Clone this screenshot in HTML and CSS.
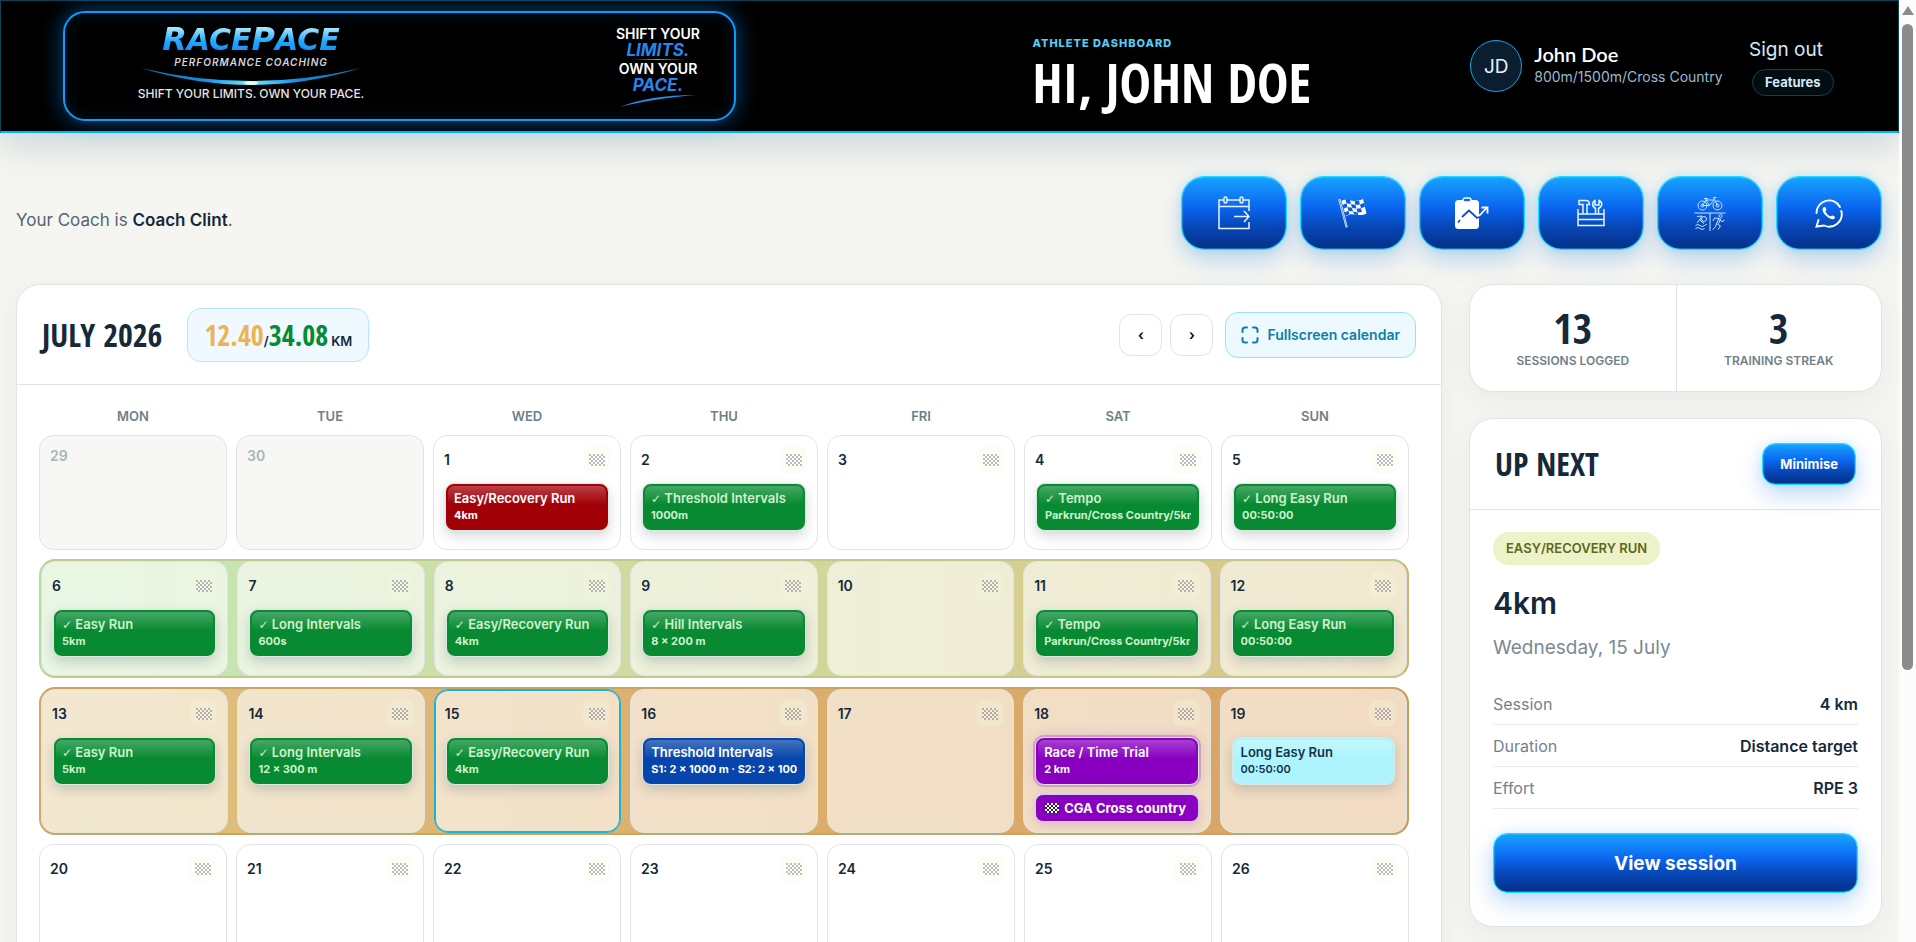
FILE: index.html
```html
<!DOCTYPE html>
<html lang="en">
<head>
  <meta charset="UTF-8">
  <meta name="viewport" content="width=device-width, initial-scale=1.0">
  <title>RacePace - Athlete Dashboard</title>
  <link rel="stylesheet" href="styles.css">
</head>
<body>

  <div class="app">

    <header class="topbar">
      <div class="banner">
        <div class="logo">
          <div class="logo-name"><span>R</span>ACE<span>P</span>ACE</div>
          <div class="logo-sub">PERFORMANCE COACHING</div>
          <svg class="logo-swoosh" viewBox="0 0 220 18" aria-hidden="true">
            <defs>
              <linearGradient id="swoosh">
                <stop offset="0" stop-color="#0b6f9c"/>
                <stop offset="0.3" stop-color="#1790ea"/>
                <stop offset="0.5" stop-color="#6ff0ff"/>
                <stop offset="0.7" stop-color="#1790ea"/>
                <stop offset="1" stop-color="#0b6f9c"/>
              </linearGradient>
            </defs>
            <path d="M0 0Q110 26 220 0Q110 34 0 0Z" fill="url(#swoosh)"/>
            <ellipse cx="110" cy="15" rx="7" ry="2" fill="#d9fff8"/>
          </svg>
          <div class="logo-tag">SHIFT YOUR LIMITS. OWN YOUR PACE.</div>
        </div>
        <div class="motto">
          <span>SHIFT YOUR</span>
          <em>LIMITS.</em>
          <i class="motto-line"></i>
          <span>OWN YOUR</span>
          <em>PACE.</em>
          <svg viewBox="0 0 78 14" width="78" height="14" aria-hidden="true">
            <path d="M1 13Q30 1 77 1Q32 5 1 13Z" fill="#1c8fe6"/>
          </svg>
        </div>
      </div>

      <div class="greeting">
        <p class="eyebrow">ATHLETE DASHBOARD</p>
        <h1>HI, JOHN DOE</h1>
      </div>

      <div class="user">
        <div class="avatar">JD</div>
        <div>
          <div class="user-name">John Doe</div>
          <div class="user-events">800m/1500m/Cross Country</div>
        </div>
      </div>

      <div class="account">
        <a href="#" class="signout">Sign out</a>
        <button class="features">Features</button>
      </div>
    </header>

    <section class="intro">
      <p class="coach">Your Coach is <strong>Coach Clint</strong>.</p>
      <div class="shortcuts">
        <button class="shortcut" aria-label="Schedule">
          <svg viewBox="0 0 32 34" width="32" height="34" fill="none" stroke="#e8f4ff" stroke-width="1.5">
            <path d="M6 4H1V32.500H31V26M9 4H22M25.500 4H31V15M1 10.500H31"/>
            <rect x="6" y="1" width="3" height="6" rx="1.500"/>
            <rect x="22" y="1" width="3" height="6" rx="1.500"/>
            <path d="M16 20.500H31M26 15L31 20.500L26 26"/>
          </svg>
        </button>
        <button class="shortcut" aria-label="Races">
          <svg viewBox="0 0 30 30" width="30" height="30">
            <path d="M1.500 2L8.500 28.500" stroke="#e8f4ff" stroke-width="2.200" stroke-linecap="round"/>
            <path d="M1.500 2L8.500 28.500" stroke="#0b55d8" stroke-width=".6"/>
            <path d="M3.500 3C8 -1 14 6 25 1L28.500 15.500C20 20 15 13 8 18.500Z" fill="#fff"/>
            <g fill="#0b5be0">
              <path d="M7.500 1.600L12 2.200L13 6L8.500 5.200ZM16.500 3.200L21 2.800L22 6.500L17.500 7ZM4.500 7L8.500 5.200L9.500 9L5.500 10.800ZM13 6L17.500 7L18.500 10.800L14 9.800ZM22 6.500L26 5L27 8.700L23 10.300ZM9.500 9L14 9.800L15 13.500L10.500 12.800ZM18.500 10.800L23 10.300L24 14L19.500 14.500ZM6.500 14.500L10.500 12.800L11.500 16.200L7.500 18ZM15 13.500L19.500 14.500L20.300 17.300L16 16.200Z"/>
            </g>
          </svg>
        </button>
        <button class="shortcut" aria-label="Progress">
          <svg viewBox="0 0 34 32" width="34" height="32">
            <rect x="0" y="3" width="24" height="29" rx="3.500" fill="#fff"/>
            <rect x="8" y="1" width="8" height="4" rx="2" fill="#0c6df0" stroke="#fff" stroke-width="1.300"/>
            <path d="M3 25.500L5 23M7 20L14 13.500L22 21L24 20" fill="none" stroke="#0a50c8" stroke-width="1.800"/>
            <path d="M24 19L32 10.500M26.500 10.500H32.500V16.500" fill="none" stroke="#fff" stroke-width="1.800"/>
          </svg>
        </button>
        <button class="shortcut" aria-label="Toolbox">
          <svg viewBox="0 0 28 28" width="28" height="28" fill="none" stroke="#e8f4ff" stroke-width="1.500">
            <path d="M1 10V26.500H27V10M1 15H27M1 20.500H27"/>
            <path d="M6 15V5.500H2V1.500H9C11.500 1.500 12.500 3 12.500 5.500H10V15"/>
            <path d="M18.500 15V9.500C14.500 7.500 15 3 18 1.500V6H22V1.500C25.500 3 26 7.500 21.500 9.500V15"/>
          </svg>
        </button>
        <button class="shortcut" aria-label="Cross training">
          <svg viewBox="0 0 32 35" width="32" height="35" fill="none" stroke="#c9e2ff" stroke-width="1">
            <circle cx="8.500" cy="9.500" r="4.500"/><circle cx="8.500" cy="9.500" r="1.500"/>
            <circle cx="23.500" cy="9.500" r="4.500"/><circle cx="23.500" cy="9.500" r="1.500"/>
            <path d="M8.500 9.500L12 4H20L15.500 9.500H8.500M12 4L15.500 9.500M23.500 9.500L19.500 1.500H22.500M10 2.500H14M11.500 2.500L12.500 5"/>
            <path d="M.5 17H31.500M16 17V35"/>
            <circle cx="10" cy="23" r="2.500"/>
            <path d="M3 20.500L8 20L5.500 24L10 27.500M3 27L6 23M1.500 29.500Q4 27.500 6 29.500T10.500 29.500T13 29M1.500 32.500Q4 30.500 6 32.500T10.500 32.500"/>
            <circle cx="26.500" cy="20" r="1.500"/>
            <path d="M25 22.500L20.500 22L19 25M25 22.500L27.500 25.500L30.500 24.500M25 22.500L22.500 27.500L26.500 30L24 33.500M22.500 27.500L21.500 31L18.500 33.500M27 22.500L24.500 27.500"/>
          </svg>
        </button>
        <button class="shortcut" aria-label="WhatsApp">
          <svg viewBox="0 0 28 29" width="28" height="29" fill="none" stroke="#fff" stroke-width="1.900" stroke-linecap="round">
            <path d="M1.500 14A12.500 12.500 0 0 1 25 8M26.300 12A12.500 12.500 0 0 1 9 26.500L1.500 27.500L3.500 21"/>
            <path d="M8.500 8.500C6 11 9 15 12 17.500C15.500 20.500 18.500 21 19.800 19.200C20.500 18 19 17 17.500 16.500C16 16.200 16 18 14.500 17C12.500 15.800 11.500 14.500 10.800 13C10.200 11.700 12 11.500 11 9.500C10.300 8 9.300 7.700 8.500 8.500Z" fill="#fff" stroke="none"/>
          </svg>
        </button>
      </div>
    </section>

    <main class="layout">

      <section class="card calendar">
        <div class="calendar-head">
          <h2>JULY 2026</h2>
          <div class="distance">
            <span class="done">12.40</span><span class="slash">/</span><span class="planned">34.08</span><span class="unit">KM</span>
          </div>
          <div class="calendar-nav">
            <button class="nav-btn" aria-label="Previous month">‹</button>
            <button class="nav-btn" aria-label="Next month">›</button>
            <button class="fullscreen-btn">
              <svg viewBox="0 0 18 18" width="18" height="18" fill="none" stroke="#0d7fa5" stroke-width="2" stroke-linecap="round" aria-hidden="true">
                <path d="M1.500 6V4Q1.500 1.500 4 1.500H6M12 1.500H14Q16.500 1.500 16.500 4V6M16.500 12V14Q16.500 16.500 14 16.500H12M6 16.500H4Q1.500 16.500 1.500 14V12"/>
              </svg>
              Fullscreen calendar
            </button>
          </div>
        </div>
        <div class="calendar-body">
          <div class="weekdays">
            <span>MON</span><span>TUE</span><span>WED</span><span>THU</span><span>FRI</span><span>SAT</span><span>SUN</span>
          </div>
          <div id="weeks" class="weeks"></div>
        </div>
      </section>

      <aside class="sidebar">
        <section class="card stats">
          <div class="stat">
            <div class="stat-value">13</div>
            <div class="stat-label">SESSIONS LOGGED</div>
          </div>
          <div class="stat">
            <div class="stat-value">3</div>
            <div class="stat-label">TRAINING STREAK</div>
          </div>
        </section>

        <section class="card next">
          <div class="next-head">
            <h2>UP NEXT</h2>
            <button class="primary minimise">Minimise</button>
          </div>
          <div class="next-body">
            <span class="badge">EASY/RECOVERY RUN</span>
            <h3>4km</h3>
            <p class="next-date">Wednesday, 15 July</p>
            <dl class="details">
              <div><dt>Session</dt><dd>4 km</dd></div>
              <div><dt>Duration</dt><dd>Distance target</dd></div>
              <div><dt>Effort</dt><dd>RPE 3</dd></div>
            </dl>
            <button class="primary view">View session</button>
          </div>
        </section>
      </aside>

    </main>
  </div>

  <div class="scrollbar" aria-hidden="true">
    <span class="scroll-up"></span>
    <span class="scroll-thumb"></span>
  </div>

  <script>
    // type: done | missed | planned | race | easy
    const sessions = {
      1: { type: 'missed', name: 'Easy/Recovery Run', info: '4km' },
      2: { type: 'done', name: 'Threshold Intervals', info: '1000m' },
      4: { type: 'done', name: 'Tempo', info: 'Parkrun/Cross Country/5km' },
      5: { type: 'done', name: 'Long Easy Run', info: '00:50:00' },
      6: { type: 'done', name: 'Easy Run', info: '5km' },
      7: { type: 'done', name: 'Long Intervals', info: '600s' },
      8: { type: 'done', name: 'Easy/Recovery Run', info: '4km' },
      9: { type: 'done', name: 'Hill Intervals', info: '8 × 200 m' },
      11: { type: 'done', name: 'Tempo', info: 'Parkrun/Cross Country/5km' },
      12: { type: 'done', name: 'Long Easy Run', info: '00:50:00' },
      13: { type: 'done', name: 'Easy Run', info: '5km' },
      14: { type: 'done', name: 'Long Intervals', info: '12 × 300 m' },
      15: { type: 'done', name: 'Easy/Recovery Run', info: '4km' },
      16: { type: 'planned', name: 'Threshold Intervals', info: 'S1: 2 × 1000 m · S2: 2 × 1000 m' },
      18: { type: 'race', name: 'Race / Time Trial', info: '2 km', race: 'CGA Cross country' },
      19: { type: 'easy', name: 'Long Easy Run', info: '00:50:00' }
    };

    const weeks = [
      { style: '', days: [29, 30, 1, 2, 3, 4, 5] },
      { style: 'week-light', days: [6, 7, 8, 9, 10, 11, 12] },
      { style: 'week-heavy', days: [13, 14, 15, 16, 17, 18, 19] },
      { style: '', days: [20, 21, 22, 23, 24, 25, 26] }
    ];

    const today = 15;

    function dayCell(day, outside) {
      if (outside) return `<div class="day outside"><span class="day-number">${day}</span></div>`;
      const s = sessions[day];
      return `
        <div class="day ${day === today ? 'today' : ''}">
          <div class="day-head">
            <span class="day-number">${day}</span>
            <button class="flag-btn" aria-label="Add race on ${day} July"><i class="checker"></i></button>
          </div>
          ${s ? `<button class="session ${s.type}">
            <span class="session-name">${s.type === 'done' ? '<b class="tick">✓</b> ' : ''}${s.name}</span>
            <span class="session-info">${s.info}</span>
          </button>` : ''}
          ${s && s.race ? `<button class="race-tag"><i class="checker"></i><span>${s.race}</span></button>` : ''}
        </div>`;
    }

    document.getElementById('weeks').innerHTML = weeks.map((week, i) =>
      `<div class="week ${week.style}">${week.days.map(d => dayCell(d, i === 0 && d > 7)).join('')}</div>`
    ).join('');
  </script>

</body>
</html>
```

FILE: styles.css
```css
* {
  box-sizing: border-box;
}

html {
  scrollbar-width: none;
}

body {
  margin: 0;
  display: flex;
  min-height: 100vh;
  background: #f5f6f1;
  color: #14293a;
  font-family: Inter, "Open Sans", sans-serif;
  font-size: 16px;
}

button {
  font-family: inherit;
  cursor: pointer;
}

h1, h2, h3, p, dl, dd {
  margin: 0;
}

h1, h2, .distance, .stat-value {
  font-family: "Liberation Sans Narrow", "Open Sans Condensed", "DejaVu Sans Condensed", sans-serif;
}

h2 {
  font-size: 32px;
  line-height: 40px;
}

.app {
  flex: 1;
  min-width: 0;
}

/* Header */
.topbar {
  display: grid;
  grid-template-columns: 970fr 438fr 279fr 149fr;
  align-items: center;
  height: 133px;
  padding-left: 62px;
  background: #000;
  border: 1px solid #0a4358;
  border-bottom: 2px solid #00b4ff;
  box-shadow: 0 12px 36px rgba(0, 60, 100, 0.18);
}

.banner {
  display: flex;
  justify-content: space-between;
  width: 673px;
  max-width: 90%;
  height: 110px;
  padding: 10px 34px 10px 20px;
  border: 2px solid #0a9bff;
  border-radius: 22px;
  background: #000;
  box-shadow: 0 0 22px rgba(0, 150, 255, 0.5), inset 0 0 18px rgba(0, 120, 200, 0.18);
}

.logo {
  display: flex;
  flex-direction: column;
  align-items: center;
  width: 332px;
}

.logo-name {
  font-family: "DejaVu Sans", sans-serif;
  font-size: 30px;
  line-height: 32px;
  font-weight: bold;
  font-style: italic;
  color: transparent;
  background: linear-gradient(#b8f0ff 10%, #1fa8ff 55%, #1484f5);
  background-clip: text;
}

.logo-name span {
  font-size: 32px;
}

.logo-sub {
  font-size: 10px;
  line-height: 12px;
  font-style: italic;
  font-weight: 600;
  letter-spacing: 1px;
  color: #d5d5d5;
}

.logo-swoosh {
  width: 220px;
  height: 18px;
  flex: none;
}

.logo-tag {
  font-size: 12px;
  line-height: 16px;
  font-weight: 500;
  color: #e4e4e4;
}

.motto {
  display: flex;
  flex-direction: column;
  align-items: center;
  justify-content: center;
  font-size: 14px;
  line-height: 17px;
  font-weight: 600;
  color: #fff;
}

.motto em {
  font-size: 17px;
  font-weight: 700;
  color: #2a84ee;
}

.motto-line {
  width: 54px;
  height: 1px;
  background: linear-gradient(90deg, #000, #3fc7a0, #000);
}

.greeting {
  padding-top: 16px;
}

.eyebrow {
  font-size: 11px;
  line-height: 14px;
  font-weight: 800;
  letter-spacing: 1px;
  color: #55cdf5;
}

h1 {
  margin-top: 4px;
  font-size: 53px;
  line-height: 58px;
  font-weight: 800;
  color: #fff;
  white-space: nowrap;
}

.user {
  display: flex;
  align-items: center;
  gap: 12px;
  white-space: nowrap;
}

.avatar {
  display: flex;
  align-items: center;
  justify-content: center;
  flex: none;
  width: 52px;
  height: 52px;
  border: 1px solid #08a8ea;
  border-radius: 50%;
  background: #0a1e30;
  color: #e6f5ff;
  font-size: 19px;
}

.user-name {
  font-family: Lato, sans-serif;
  font-size: 20px;
  line-height: 24px;
  font-weight: 600;
  color: #fff;
}

.user-events {
  padding-bottom: 2px;
  font-size: 14px;
  line-height: 22px;
  color: #9db9cd;
}

.account {
  display: flex;
  flex-direction: column;
  align-items: flex-start;
  gap: 6px;
}

.signout {
  font-size: 19px;
  line-height: 26px;
  color: #d3e9f7;
  text-decoration: none;
}

.features {
  margin-left: 3px;
  height: 27px;
  padding: 0 12px;
  border: 1px solid #0b4357;
  border-radius: 14px;
  background: #020d12;
  color: #d3e9f7;
  font-size: 13px;
  font-weight: 700;
}

/* Coach line and shortcut buttons */
.intro {
  display: flex;
  align-items: flex-end;
  justify-content: space-between;
  padding: 43px 17px 34px 16px;
}

.coach {
  padding-bottom: 18px;
  font-size: 17px;
  line-height: 24px;
  color: #55656f;
}

.coach strong {
  font-weight: 600;
  color: #14293a;
}

.shortcuts {
  display: flex;
  gap: 13px;
}

.shortcut,
.primary {
  display: flex;
  align-items: center;
  justify-content: center;
  border: 1px solid #1fdcff;
  background: linear-gradient(#18a3ff, #0a66f0 42%, #0748b8 68%, #052f87) padding-box;
  color: #fff;
  font-weight: 700;
  box-shadow: 0 10px 24px rgba(0, 100, 220, 0.24), 0 0 10px rgba(0, 190, 255, 0.14), inset 0 0 0 1px rgba(30, 215, 255, 0.4);
}

.shortcut {
  width: 106px;
  height: 74px;
  padding: 0;
  border-radius: 23px;
}

/* Main layout */
.layout {
  display: grid;
  grid-template-columns: minmax(0, 1426fr) minmax(0, 413fr);
  gap: 27px;
  align-items: start;
  padding: 0 17px 26px 16px;
}

.card {
  background: #fff;
  border: 1px solid #dfe5e5;
  border-radius: 24px;
  box-shadow: 0 8px 26px rgba(30, 50, 60, 0.06);
}

.calendar-head {
  display: flex;
  align-items: center;
  height: 100px;
  padding: 0 25px;
  border-bottom: 1px solid #dfe5e5;
}

.distance {
  display: flex;
  align-items: baseline;
  margin-left: 25px;
  padding: 9px 16px;
  border: 1px solid #b4e7fd;
  border-radius: 14px;
  background: #f0f9ff;
  font-size: 28px;
  line-height: 34px;
  font-weight: bold;
}

.done {
  color: #ebb453;
}

.planned {
  color: #068a33;
}

.slash,
.unit {
  font-family: Inter, sans-serif;
  font-size: 13px;
  line-height: 14px;
  font-weight: 600;
}

.unit {
  margin-left: 3px;
}

.calendar-nav {
  display: flex;
  align-items: center;
  gap: 8px;
  margin-left: auto;
}

.nav-btn {
  width: 43px;
  height: 42px;
  padding: 0;
  border: 1px solid #dfe5e5;
  border-radius: 12px;
  background: #fff;
  color: #000;
  font-size: 14px;
  font-weight: 600;
}

.fullscreen-btn {
  display: flex;
  align-items: center;
  gap: 8px;
  height: 46px;
  margin-left: 4px;
  padding: 0 15px;
  border: 1px solid #9be0fb;
  border-radius: 13px;
  background: #ecf9ff;
  color: #0d7fa5;
  font-size: 14px;
  font-weight: 600;
}

.calendar-body {
  padding: 21px 32px 22px 22px;
}

.weekdays {
  display: grid;
  grid-template-columns: repeat(7, 1fr);
  gap: 9px;
  margin-bottom: 9px;
  text-align: center;
  font-size: 13px;
  line-height: 20px;
  font-weight: 600;
  color: #6f7f8a;
}

.weeks {
  display: grid;
  gap: 9px;
}

.week {
  display: grid;
  grid-template-columns: repeat(7, minmax(0, 1fr));
  gap: 9px;
}

.week-light,
.week-heavy {
  border: 2px solid #b5d9a4;
  border-radius: 16px;
}

.week-light {
  border-color: #c2c98c #cdb271 #c2c98c #b3dba6;
  background: linear-gradient(90deg, #c4e8b9, #d1d89c 50%, #ddc284);
}

.week-heavy {
  border-color: #c9a463 #cf9955 #c9a463 #ceac68;
  background: linear-gradient(90deg, #dfc282, #dcae6c 50%, #d9a263);
}

.day {
  display: flex;
  flex-direction: column;
  min-height: 115px;
  padding: 10px;
  border: 1px solid #dfe5e5;
  border-radius: 14px;
  background: #fff;
}

.week-light .day,
.week-heavy .day {
  background: rgba(255, 255, 255, 0.62);
}

.day.outside {
  background: #f7f8f6;
}

.week .day.today {
  border-color: #17b4d4;
  box-shadow: inset 0 0 0 1px #17b4d4;
}

.outside .day-number {
  color: #a9b6b8;
}

.day-head {
  display: flex;
  align-items: center;
  justify-content: space-between;
  margin-bottom: 10px;
}

.day-number {
  font-size: 14px;
  line-height: 20px;
  font-weight: 600;
}

.flag-btn {
  display: flex;
  align-items: center;
  justify-content: center;
  width: 27px;
  height: 27px;
  padding: 0;
  border: 0;
  border-radius: 8px;
  background: rgba(245, 250, 220, 0.25);
}

.flag-btn .checker {
  opacity: 0.3;
}

.checker {
  flex: none;
  width: 16px;
  height: 12px;
  background: repeating-conic-gradient(#fff 0 25%, #2d2040 0 50%) 0 0 / 4px 4px;
}

.session {
  --base: #078a32;
  display: block;
  margin: 0 1px;
  padding: 6px 8px;
  border: 1px solid #dce8e2;
  border-radius: 9px;
  background: linear-gradient(rgba(255, 255, 255, 0.28), rgba(255, 255, 255, 0) 45%) padding-box, var(--base);
  color: #cdf2cb;
  text-align: left;
  overflow: hidden;
  box-shadow: inset 0 0 0 2px var(--base), 0 5px 12px rgba(20, 40, 60, 0.18);
}

.session span {
  display: block;
  overflow: hidden;
  white-space: nowrap;
}

.session-name {
  font-size: 13px;
  line-height: 17px;
  font-weight: 600;
}

.tick {
  font-family: "DejaVu Sans", sans-serif;
  font-size: 12px;
  line-height: 14px;
}

.session-info {
  font-size: 11px;
  line-height: 17px;
  font-weight: 700;
}

.session.missed {
  --base: #a10007;
  color: #fff;
}

.session.planned {
  --base: #0645ab;
  color: #fff;
}

.session.race {
  --base: #8900c1;
  color: #fff;
  box-shadow: inset 0 0 0 2px var(--base), 0 0 0 2px rgba(150, 40, 190, 0.28), 0 0 14px rgba(150, 40, 190, 0.22);
}

.session.easy {
  --base: #aef4ff;
  color: #10364a;
}

.session.easy span {
  font-weight: 600;
}

.race-tag {
  display: flex;
  align-items: center;
  gap: 5px;
  height: 28px;
  margin: 9px 1px 0;
  padding: 0 9px;
  border: 1px solid #cfd0f0;
  border-radius: 8px;
  background: #8900c1;
  color: #fff;
  font-size: 13px;
  font-weight: 700;
  white-space: nowrap;
  overflow: hidden;
  box-shadow: 0 3px 10px rgba(150, 40, 190, 0.2);
}

.race-tag .checker {
  width: 14px;
  height: 10px;
  border-radius: 2px;
}

/* Sidebar */
.sidebar {
  display: grid;
  gap: 26px;
}

.stats {
  display: grid;
  grid-template-columns: 1fr 1fr;
  text-align: center;
}

.stat {
  padding: 20px 0;
}

.stat + .stat {
  border-left: 1px solid #dfe5e5;
}

.stat-value {
  font-size: 42px;
  line-height: 46px;
  font-weight: bold;
}

.stat-label {
  font-size: 12px;
  line-height: 20px;
  font-weight: 600;
  color: #6f7f8a;
}

.next-head {
  display: flex;
  align-items: center;
  justify-content: space-between;
  height: 91px;
  padding: 0 25px;
  border-bottom: 1px solid #dfe5e5;
}

.minimise {
  height: 42px;
  padding: 0 17px;
  border-radius: 13px;
  font-size: 13px;
}

.next-body {
  padding: 22px 23px 33px;
}

.badge {
  display: inline-block;
  padding: 0 13px;
  border-radius: 16px;
  background: #edf3c9;
  color: #5e671b;
  font-size: 13px;
  line-height: 33px;
  font-weight: 600;
}

h3 {
  margin-top: 20px;
  font-size: 30px;
  line-height: 36px;
  font-weight: 600;
}

.next-date {
  margin-top: 13px;
  font-size: 19px;
  line-height: 28px;
  color: #7b8993;
}

.details {
  margin: 21px 0 24px;
}

.details div {
  display: flex;
  align-items: center;
  justify-content: space-between;
  height: 42px;
  border-bottom: 1px solid #e8eced;
  font-size: 16px;
}

dt {
  color: #73828c;
}

dd {
  font-weight: 600;
}

.view {
  width: 100%;
  height: 60px;
  border-radius: 14px;
  font-size: 19px;
}

/* Page scrollbar */
.scrollbar {
  position: sticky;
  top: 0;
  display: flex;
  flex-direction: column;
  align-items: center;
  flex: none;
  width: 17px;
  height: 100vh;
  padding-top: 6px;
  background: #fcfcfc;
}

.scroll-up {
  border: 6px solid transparent;
  border-top: 0;
  border-bottom: 9px solid #8b8b8b;
}

.scroll-thumb {
  width: 11px;
  height: 69%;
  margin-top: 9px;
  border-radius: 6px;
  background: #8b8b8b;
}
```
